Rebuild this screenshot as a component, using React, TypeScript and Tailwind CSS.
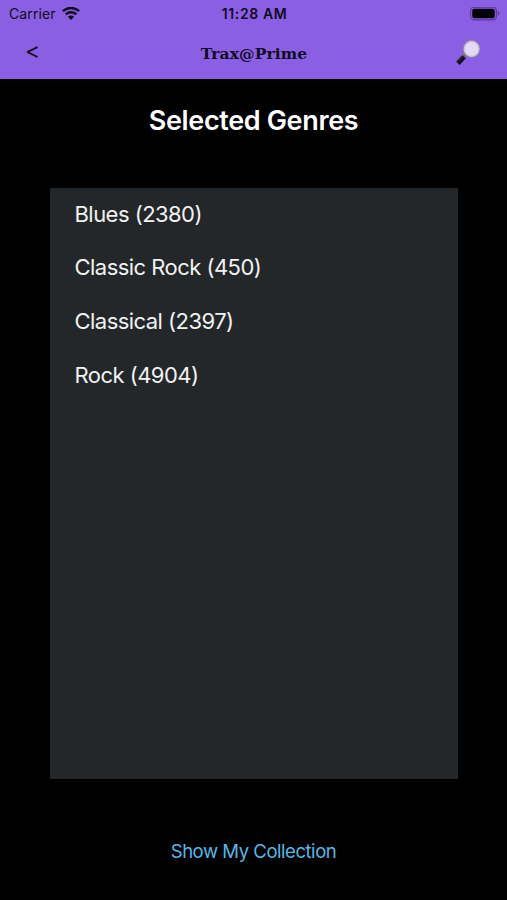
const genres = [
  { name: "Blues", count: 2380 },
  { name: "Classic Rock", count: 450 },
  { name: "Classical", count: 2397 },
  { name: "Rock", count: 4904 },
];

function WifiIcon() {
  return (
    <svg width="18" height="14" viewBox="0 0 18 14" fill="none" stroke="#100b1e" strokeWidth="2.4">
      <path d="M0.9 4.2a11.7 11.7 0 0 1 16.2 0" />
      <path d="M3.7 7.3a7.7 7.7 0 0 1 10.6 0" />
      <path d="M9 12.9 5.9 9.7a4.4 4.4 0 0 1 6.2 0Z" fill="#100b1e" stroke="none" />
    </svg>
  );
}

function BatteryIcon() {
  return (
    <svg width="30" height="14" viewBox="0 0 30 14">
      <rect x="0.6" y="0.1" width="25.8" height="12.8" rx="3.6" fill="none" stroke="#56389a" strokeWidth="1.1" />
      <rect x="2.2" y="1.7" width="22.6" height="9.6" rx="2.2" fill="#020104" />
      <path d="M27.8 4.3c1.9.7 1.9 3.7 0 4.4Z" fill="#56389a" />
    </svg>
  );
}

function SearchIcon() {
  return (
    <svg width="28" height="28" viewBox="0 0 28 28">
      <defs>
        <linearGradient id="handle" x1="0" y1="0" x2="1" y2="1">
          <stop offset="0" stopColor="#55505c" />
          <stop offset="0.5" stopColor="#17131c" />
          <stop offset="1" stopColor="#08060b" />
        </linearGradient>
      </defs>
      <path d="m11.4 14-3 3.2" stroke="#77717d" strokeWidth="2.8" />
      <path d="M9 16.6 2.8 23.2" stroke="url(#handle)" strokeWidth="5" />
      <circle cx="16.6" cy="8.9" r="8.3" fill="#e5d9f4" stroke="#8d8795" strokeWidth="1.1" />
      <circle cx="16.6" cy="8.9" r="7.3" fill="none" stroke="#c9c2d0" strokeWidth="1.1" />
    </svg>
  );
}

export default function App() {
  return (
    <div className="flex h-[900px] w-[507px] flex-col overflow-hidden bg-black font-['Inter','Liberation_Sans',sans-serif]">
      <header className="flex h-[79px] flex-col bg-[#8b5fe3] text-[#100b1e]">
        <div className="grid h-7 grid-cols-3 items-center pr-[7px] pl-[9px]">
          <div className="flex items-center gap-[6px]">
            <span className="text-[14px] leading-7 tracking-[0.1px]">Carrier</span>
            <WifiIcon />
          </div>
          <span className="text-center text-[14px] leading-7 font-semibold tracking-[0.6px] whitespace-nowrap">11:28 AM</span>
          <div className="flex justify-end">
            <BatteryIcon />
          </div>
        </div>
        <div className="grid h-[51px] grid-cols-3 items-center pr-[24px] pl-[25px]">
          <button className="pb-[5px] text-left text-[23px] leading-[44px]">&lt;</button>
          <h1 className="text-center font-['DejaVu_Serif',serif] text-[15.5px] leading-[51px] font-bold tracking-[0.1px]">Trax@Prime</h1>
          <button className="flex justify-end">
            <SearchIcon />
          </button>
        </div>
      </header>
      <main className="flex flex-1 flex-col items-center">
        <h2 className="mt-[22px] text-[27px] leading-[40px] font-semibold tracking-[-0.35px] text-white">Selected Genres</h2>
        <ul className="mt-[46.5px] h-[591px] w-[408px] bg-[#242729] pl-[25px] text-[22px] tracking-[-0.54px] text-[#f1f2f2]">
          {genres.map((genre) => (
            <li key={genre.name} className="h-[53.75px] leading-[53.5px]">
              {genre.name} ({genre.count})
            </li>
          ))}
        </ul>
        <button className="mt-[57.5px] text-[18.5px] leading-[30px] tracking-[-0.46px] text-[#56b9e8]">Show My Collection</button>
      </main>
    </div>
  );
}
